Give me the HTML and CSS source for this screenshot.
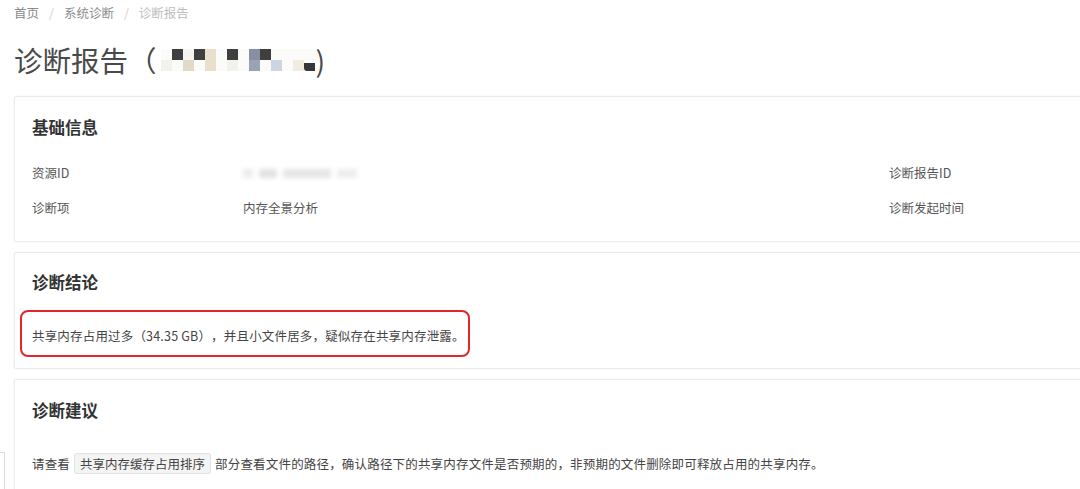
FILE: index.html
```html
<!DOCTYPE html>
<html lang="zh-CN">
<head>
<meta charset="utf-8">
<title>诊断报告</title>
<link rel="stylesheet" href="styles.css">
</head>
<body>
<div class="page">
  <nav class="crumbs">
    <span class="crumb">首页</span><span class="sep">/</span><span class="crumb">系统诊断</span><span class="sep">/</span><span class="crumb current">诊断报告</span>
  </nav>
  <h1 class="title">诊断报告（<span class="mosaic"><i class="m-n"></i><i class="m-d"></i><i class="m-w"></i><i class="m-d"></i><i class="m-b"></i><i class="m-n"></i><i class="m-d"></i><i class="m-n"></i><i class="m-g"></i><i class="m-d"></i><i class="m-n"></i><i class="m-n"></i><i class="m-n"></i><i class="m-n"></i><i class="m-l"></i><i class="m-n"></i><i class="m-b2"></i><i class="m-n"></i><i class="m-b"></i><i class="m-n"></i><i class="m-l"></i><i class="m-n"></i><i class="m-g2"></i><i class="m-n"></i><i class="m-lb"></i><i class="m-n"></i><i class="m-l2"></i><i class="m-d2"></i></span>)</h1>

  <section class="card card-info">
    <h2 class="card-title">基础信息</h2>
    <div class="info-grid">
      <div class="label">资源ID</div>
      <div class="value"><span class="blur"><i class="bl1"></i><i class="bl2"></i><i class="bl3"></i><i class="bl4"></i></span></div>
      <div class="label">诊断报告ID</div>
      <div class="label">诊断项</div>
      <div class="value">内存全景分析</div>
      <div class="label">诊断发起时间</div>
    </div>
  </section>

  <section class="card card-result">
    <h2 class="card-title">诊断结论</h2>
    <p class="text highlight">共享内存占用过多（34.35 GB），并且小文件居多，疑似存在共享内存泄露。<span class="annot"></span></p>
  </section>

  <section class="card card-advice">
    <h2 class="card-title">诊断建议</h2>
    <p class="text advice">请查看<code class="tag">共享内存缓存占用排序</code>部分查看文件的路径，确认路径下的共享内存文件是否预期的，非预期的文件删除即可释放占用的共享内存。</p>
  </section>
</div>
<div class="side-widget"></div>
</body>
</html>
```

FILE: styles.css
```css
html, body {
  margin: 0;
  padding: 0;
  background: #ffffff;
  overflow: hidden;
  height: 489px;
}

body {
  font-family: "Noto Sans CJK SC", "Noto Sans", "Liberation Sans", sans-serif;
  color: #444;
  position: relative;
  text-spacing-trim: space-all;
}

.page {
  padding: 4px 0 0 14px;
  width: 1140px;
}

.crumbs {
  display: flex;
  align-items: center;
  font-size: 12.5px;
  line-height: 18px;
  color: #8a8a8a;
}

.sep {
  color: #cfcfcf;
  margin: 0 10px;
}

.crumb.current {
  color: #bdbdbd;
}

.title {
  margin: 18px 0 16px 0;
  font-size: 28.5px;
  line-height: 40px;
  font-weight: 400;
  color: #4a4a4a;
  display: flex;
  align-items: center;
}

.mosaic {
  display: inline-grid;
  grid-template-columns: repeat(14, 11px);
  grid-template-rows: 11px 11px;
  margin: 0 1px 0 4px;
  filter: blur(0.4px);
}

.mosaic i { display: block; }
.m-n { background: #fbfbfa; }
.m-w { background: #f6f4f0; }
.m-d { background: #3f3f3f; }
.m-d2 { background: #383838; border-radius: 0 0 0 3px; margin-top: 3px; }
.m-b { background: #e9dfcc; }
.m-b2 { background: #e2d9c9; }
.m-g { background: #8790a2; }
.m-g2 { background: #9aa3b4; }
.m-l { background: #f3f1ec; }
.m-l2 { background: #f1ece0; }
.m-lb { background: #cdd4e2; }

.card {
  background: #fff;
  border: 1px solid #ebebeb;
  border-radius: 2px;
  box-shadow: 0 0 3px rgba(0, 0, 0, 0.05);
  padding: 0 17px;
  margin-bottom: 10px;
}

.card-title {
  margin: 0;
  font-size: 16.5px;
  line-height: 22px;
  font-weight: 700;
  color: #333;
}

.card-info {
  padding-top: 19px;
  padding-bottom: 23px;
}

.info-grid {
  margin-top: 25px;
  display: grid;
  grid-template-columns: 211px 646px 1fr;
  grid-auto-rows: 20px;
  row-gap: 15px;
  font-size: 12.5px;
  line-height: 20px;
}

.label { color: #555; }
.value { color: #555; }

.blur {
  display: inline-flex;
  align-items: center;
  gap: 6px;
  height: 20px;
  filter: blur(2px);
}

.blur i { display: block; height: 9px; }
.bl1 { width: 10px; background: #ececec; }
.bl2 { width: 18px; background: #e2e2e2; }
.bl3 { width: 48px; background: #e6e6e6; }
.bl4 { width: 20px; background: #ededed; }

.card-result {
  padding-top: 18px;
  padding-bottom: 22px;
}

.text {
  margin: 0;
  font-size: 12.5px;
  line-height: 20px;
  color: #444;
  letter-spacing: 0.18px;
}

.highlight {
  position: relative;
  margin-top: 33px;
}

.annot {
  position: absolute;
  left: -12px;
  top: -16px;
  width: 446px;
  height: 43px;
  border: 2px solid #e1262d;
  border-radius: 8px;
  pointer-events: none;
}

.card-advice {
  padding-top: 19px;
  padding-bottom: 30px;
}

.advice {
  margin-top: 33px;
}

.tag {
  font-family: inherit;
  font-size: 12.5px;
  background: #f4f4f4;
  border: 1px solid #e2e2e2;
  border-radius: 3px;
  padding: 0 5px;
  margin: 0 4px;
  color: #444;
  letter-spacing: 0;
}

.side-widget {
  position: absolute;
  left: -20px;
  top: 452px;
  width: 23px;
  height: 60px;
  border: 1px solid #dcdcdc;
  background: #fff;
}
```
